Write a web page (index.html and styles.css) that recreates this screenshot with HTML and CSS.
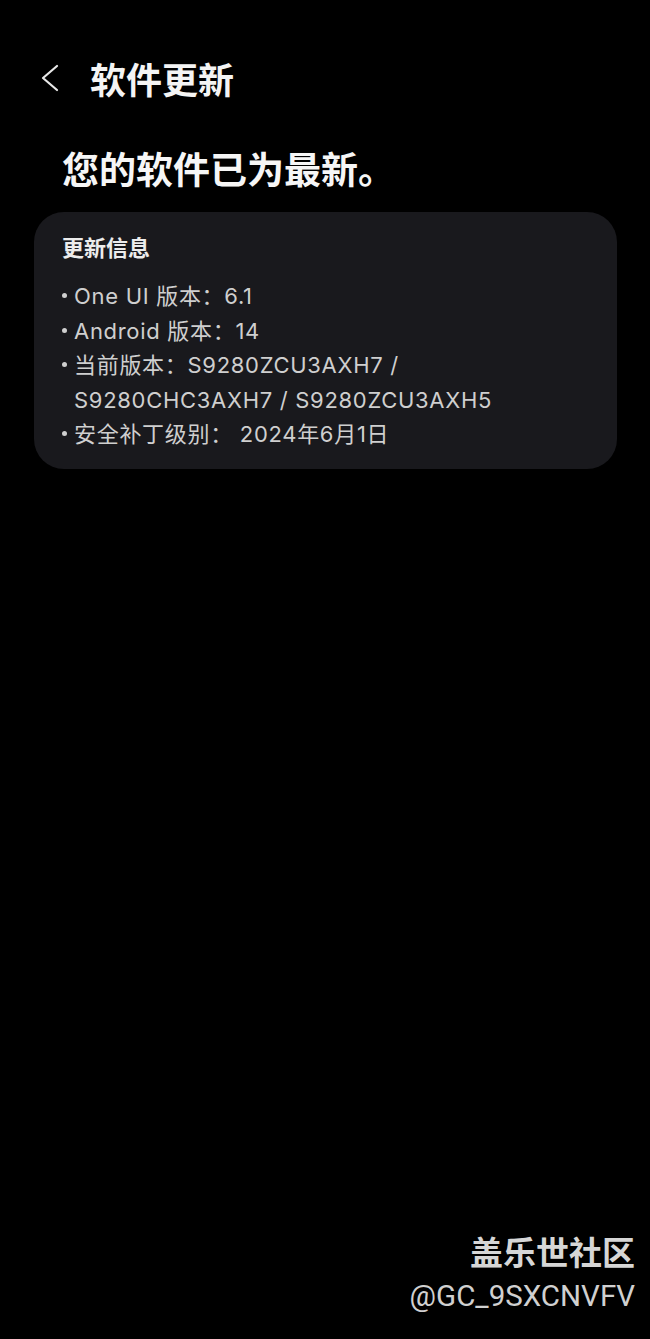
FILE: index.html
```html
<!DOCTYPE html>
<html lang="zh-CN">
<head>
  <meta charset="UTF-8" />
  <meta name="viewport" content="width=device-width, initial-scale=1.0"/>
  <title>软件更新</title>
  <link rel="stylesheet" href="styles.css">
</head>
<body>
  <div class="page">
    <div class="topbar">
      <svg class="back" width="18" height="28" viewBox="0 0 18 28">
        <polyline points="16,2 2,14 16,26" fill="none" stroke="#e8e8e8" stroke-width="2.2" stroke-linecap="round" stroke-linejoin="round"/>
      </svg>
      <span class="title">软件更新</span>
    </div>

    <h1 class="status">您的软件已为最新。</h1>

    <div class="card">
      <div class="card-label">更新信息</div>
      <ul class="info">
        <li><span class="dot"></span><span>One UI 版本：6.1</span></li>
        <li><span class="dot"></span><span>Android 版本：14</span></li>
        <li><span class="dot"></span><span>当前版本：S9280ZCU3AXH7 /<br>S9280CHC3AXH7 / S9280ZCU3AXH5</span></li>
        <li><span class="dot"></span><span>安全补丁级别：&nbsp;2024年6月1日</span></li>
      </ul>
    </div>
  </div>

  <div class="watermark">
    <div class="wm-name">盖乐世社区</div>
    <div class="wm-user">@GC_9SXCNVFV</div>
  </div>
</body>
</html>
```

FILE: styles.css
```css
body {
  margin: 0;
  background: #000;
  color: #f2f2f2;
  font-family: Inter, "Noto Sans CJK SC", sans-serif;
  min-height: 1339px;
  position: relative;
}
.page {
  padding: 0 33px 0 34px;
}
.topbar {
  display: flex;
  align-items: center;
  height: 56px;
  margin-top: 50px;
  padding-left: 7px;
}
.back {
  display: block;
}
.title {
  margin-left: 31px;
  font-size: 36px;
  font-weight: 600;
  color: #f4f4f4;
}
.status {
  margin: 43px 0 19px 28px;
  font-size: 37px;
  line-height: 44px;
  font-weight: 600;
  color: #f6f6f6;
}
.card {
  background: #19191d;
  border-radius: 30px;
  padding: 21px 28px 17px;
}
.card-label {
  font-size: 22px;
  line-height: 30px;
  font-weight: 700;
  color: #ececec;
}
.info {
  list-style: none;
  margin: 16px 0 0;
  padding: 0;
  font-size: 22px;
  line-height: 34.5px;
  letter-spacing: 0.7px;
  color: #cfcfcf;
}
.info li {
  display: flex;
  align-items: flex-start;
}
.dot {
  flex: none;
  width: 5px;
  height: 5px;
  margin: 14px 7px 0 0;
  border-radius: 50%;
  background: #cfcfcf;
}
.watermark {
  position: absolute;
  right: 15px;
  top: 1232px;
  text-align: right;
}
.wm-name {
  font-size: 33px;
  line-height: 42px;
  font-weight: 700;
  color: #d6d6d6;
}
.wm-user {
  font-family: Roboto, sans-serif;
  font-size: 29.5px;
  line-height: 44px;
  color: #d0d0d0;
}
```
